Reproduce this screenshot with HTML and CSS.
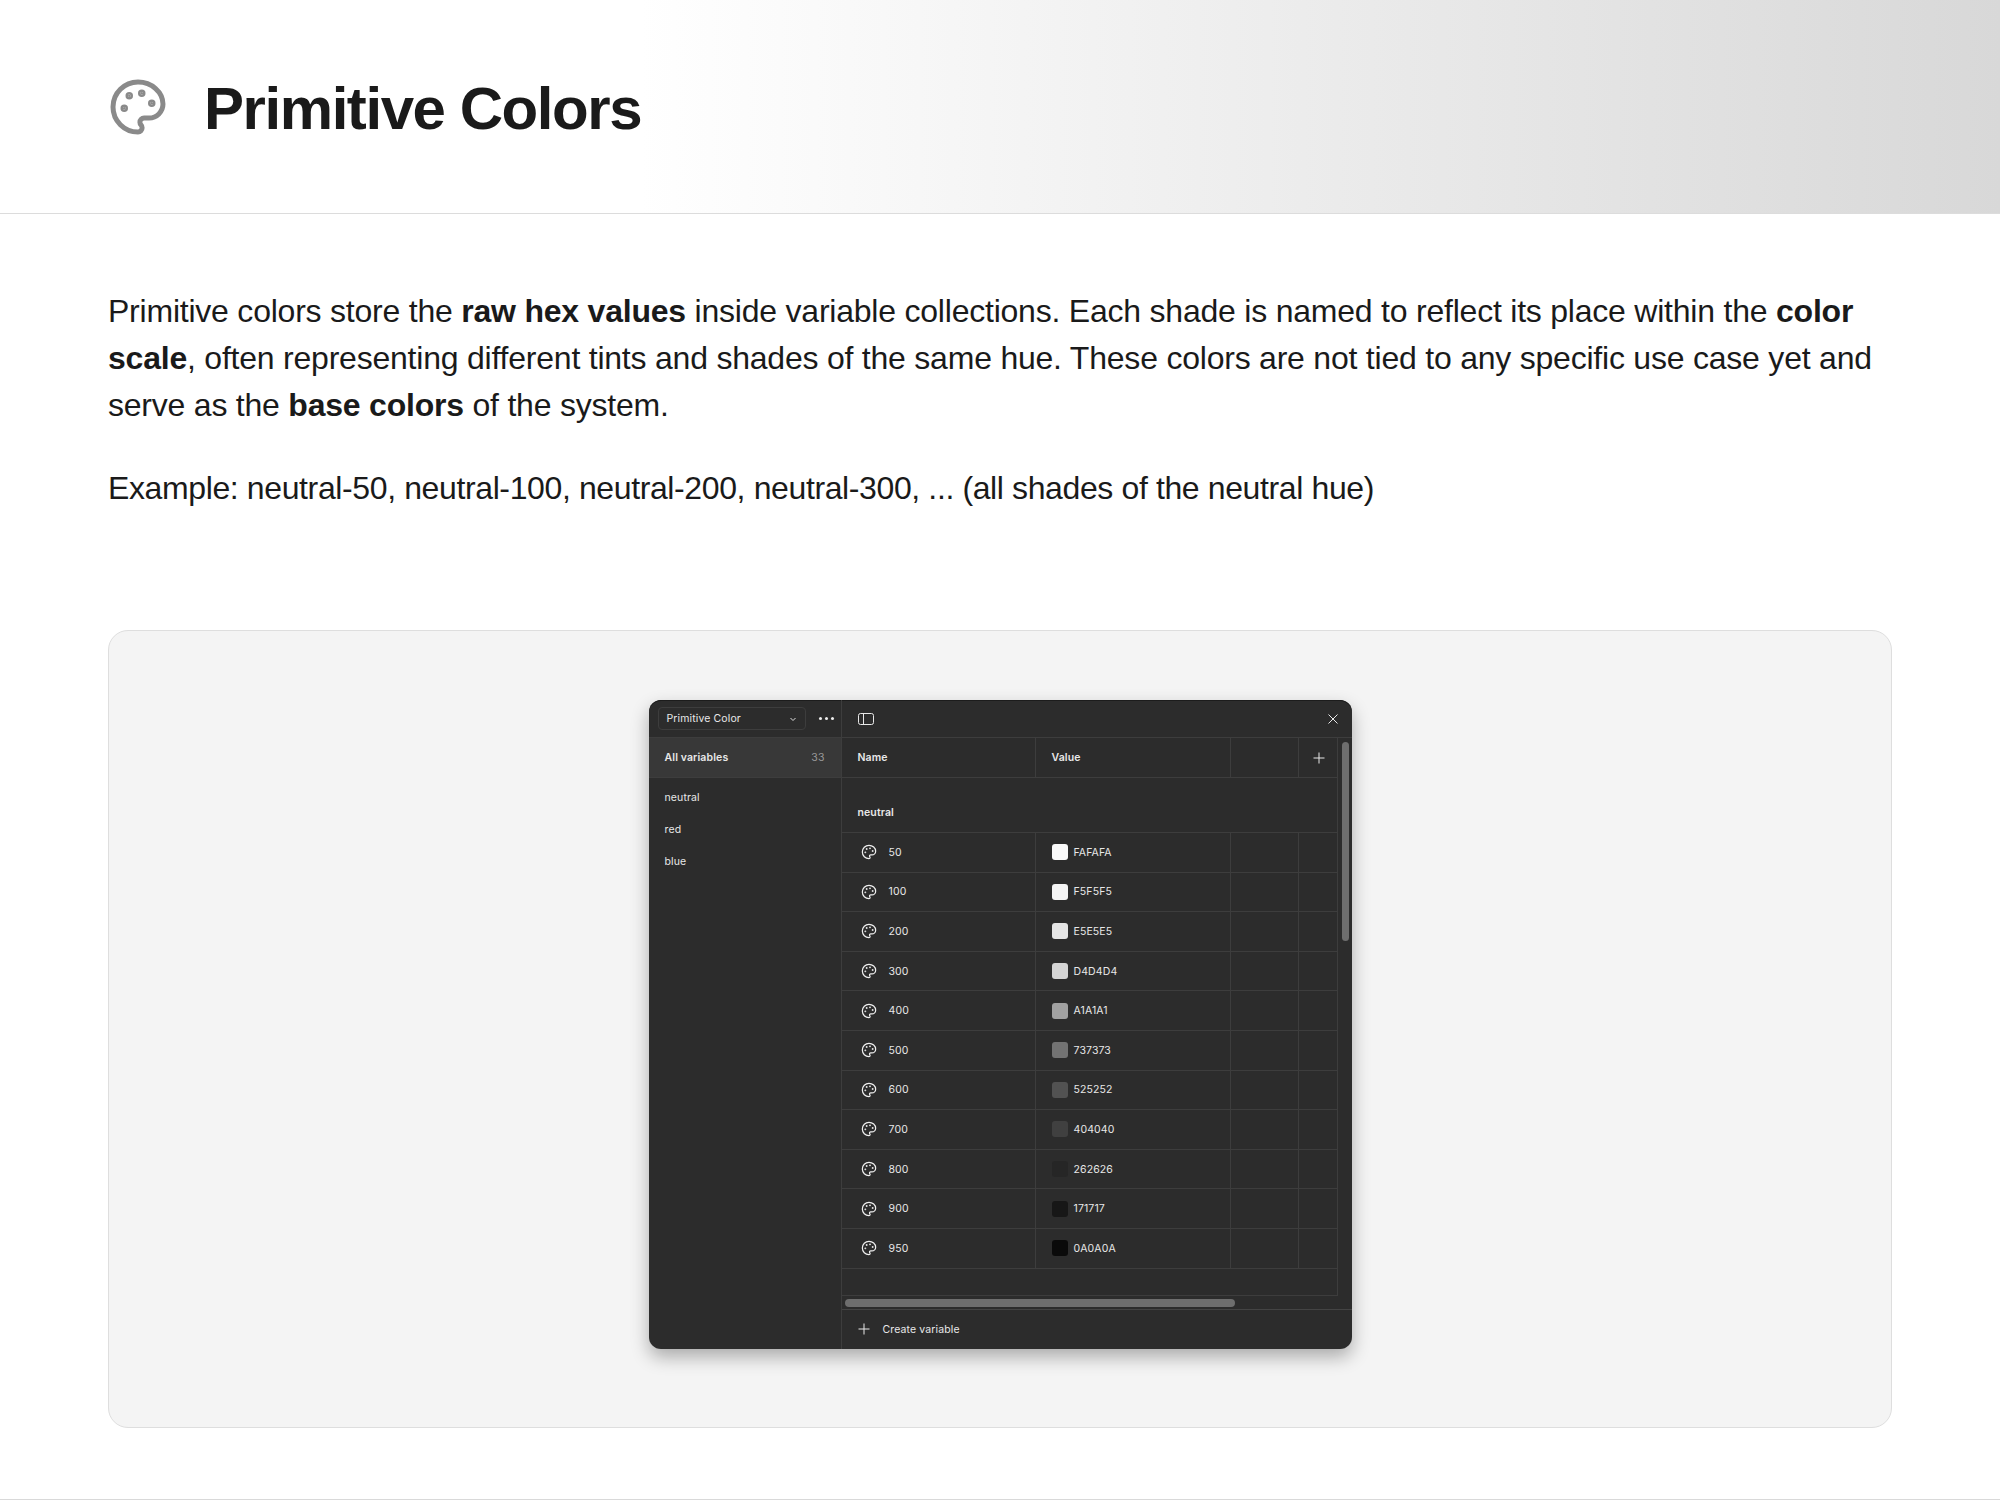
FILE: index.html
```html
<!DOCTYPE html>
<html lang="en">
<head>
    <meta charset="UTF-8">
    <title>Primitive Colors</title>
    <link rel="stylesheet" href="styles.css">
</head>
<body>
    <svg class="sprite" width="0" height="0">
        <symbol id="palette" viewBox="0 0 24 24">
            <circle cx="13.5" cy="6.5" r=".5" fill="currentColor"/>
            <circle cx="17.5" cy="10.5" r=".5" fill="currentColor"/>
            <circle cx="8.5" cy="7.5" r=".5" fill="currentColor"/>
            <circle cx="6.5" cy="12.5" r=".5" fill="currentColor"/>
            <path d="M12 2C6.5 2 2 6.5 2 12s4.5 10 10 10c.926 0 1.648-.746 1.648-1.688 0-.437-.18-.835-.437-1.125-.29-.289-.438-.652-.438-1.125a1.64 1.64 0 0 1 1.668-1.668h1.996c3.051 0 5.555-2.503 5.555-5.554C21.965 6.012 17.461 2 12 2z"/>
        </symbol>
        <symbol id="plus" viewBox="0 0 12 12">
            <path d="M6 .5v11M.5 6h11"/>
        </symbol>
    </svg>

    <!-- Header -->
    <header class="header">
        <svg class="header-icon"><use href="#palette"/></svg>
        <h1>Primitive Colors</h1>
    </header>

    <main class="content">
        <p class="intro">Primitive colors store the <b>raw hex values</b> inside variable collections. Each shade is named to reflect its place within the <b>color</b><br><b>scale</b>, often representing different tints and shades of the same hue. These colors are not tied to any specific use case yet and<br>serve as the <b>base colors</b> of the system.</p>
        <p class="intro example">Example: neutral-50, neutral-100, neutral-200, neutral-300, ... (all shades of the neutral hue)</p>

        <!-- Variables window -->
        <section class="panel">
            <div class="window">
                <aside class="side">
                    <div class="side-top">
                        <div class="select">
                            <span>Primitive Color</span>
                            <svg class="chevron" viewBox="0 0 8 8"><path d="M1.5 3l2.5 2.5L6.5 3"/></svg>
                        </div>
                        <div class="dots"><i></i><i></i><i></i></div>
                    </div>
                    <div class="side-all"><span>All variables</span><span class="count">33</span></div>
                    <ul class="side-list">
                        <li>neutral</li>
                        <li>red</li>
                        <li>blue</li>
                    </ul>
                </aside>

                <div class="main">
                    <div class="main-top">
                        <svg class="panel-icon" viewBox="0 0 16 12"><rect x=".5" y=".5" width="15" height="11" rx="2"/><path d="M5.5 .5v11"/></svg>
                        <svg class="close-icon" viewBox="0 0 10 10"><path d="M.5 .5l9 9M9.5 .5l-9 9"/></svg>
                    </div>
                    <div class="main-body">
                        <div class="table">
                            <div class="row row-head">
                                <div class="cell">Name</div>
                                <div class="cell">Value</div>
                                <div class="cell"></div>
                                <div class="cell cell-add"><svg class="plus-icon"><use href="#plus"/></svg></div>
                            </div>
                            <div class="group">neutral</div>
                            <div class="row">
                                <div class="cell"><svg class="var-icon"><use href="#palette"/></svg>50</div>
                                <div class="cell"><span class="swatch swatch-50"></span>FAFAFA</div>
                                <div class="cell"></div><div class="cell"></div>
                            </div>
                            <div class="row">
                                <div class="cell"><svg class="var-icon"><use href="#palette"/></svg>100</div>
                                <div class="cell"><span class="swatch swatch-100"></span>F5F5F5</div>
                                <div class="cell"></div><div class="cell"></div>
                            </div>
                            <div class="row">
                                <div class="cell"><svg class="var-icon"><use href="#palette"/></svg>200</div>
                                <div class="cell"><span class="swatch swatch-200"></span>E5E5E5</div>
                                <div class="cell"></div><div class="cell"></div>
                            </div>
                            <div class="row">
                                <div class="cell"><svg class="var-icon"><use href="#palette"/></svg>300</div>
                                <div class="cell"><span class="swatch swatch-300"></span>D4D4D4</div>
                                <div class="cell"></div><div class="cell"></div>
                            </div>
                            <div class="row">
                                <div class="cell"><svg class="var-icon"><use href="#palette"/></svg>400</div>
                                <div class="cell"><span class="swatch swatch-400"></span>A1A1A1</div>
                                <div class="cell"></div><div class="cell"></div>
                            </div>
                            <div class="row">
                                <div class="cell"><svg class="var-icon"><use href="#palette"/></svg>500</div>
                                <div class="cell"><span class="swatch swatch-500"></span>737373</div>
                                <div class="cell"></div><div class="cell"></div>
                            </div>
                            <div class="row">
                                <div class="cell"><svg class="var-icon"><use href="#palette"/></svg>600</div>
                                <div class="cell"><span class="swatch swatch-600"></span>525252</div>
                                <div class="cell"></div><div class="cell"></div>
                            </div>
                            <div class="row">
                                <div class="cell"><svg class="var-icon"><use href="#palette"/></svg>700</div>
                                <div class="cell"><span class="swatch swatch-700"></span>404040</div>
                                <div class="cell"></div><div class="cell"></div>
                            </div>
                            <div class="row">
                                <div class="cell"><svg class="var-icon"><use href="#palette"/></svg>800</div>
                                <div class="cell"><span class="swatch swatch-800"></span>262626</div>
                                <div class="cell"></div><div class="cell"></div>
                            </div>
                            <div class="row">
                                <div class="cell"><svg class="var-icon"><use href="#palette"/></svg>900</div>
                                <div class="cell"><span class="swatch swatch-900"></span>171717</div>
                                <div class="cell"></div><div class="cell"></div>
                            </div>
                            <div class="row">
                                <div class="cell"><svg class="var-icon"><use href="#palette"/></svg>950</div>
                                <div class="cell"><span class="swatch swatch-950"></span>0A0A0A</div>
                                <div class="cell"></div><div class="cell"></div>
                            </div>
                            <div class="row-empty"></div>
                        </div>
                        <div class="vscroll"><div class="vthumb"></div></div>
                    </div>
                    <div class="hscroll"><div class="hthumb"></div></div>
                    <div class="main-foot">
                        <svg class="plus-icon"><use href="#plus"/></svg>
                        <span>Create variable</span>
                    </div>
                </div>
            </div>
        </section>
    </main>
</body>
</html>
```

FILE: styles.css
```css
* {
    margin: 0;
    padding: 0;
    box-sizing: border-box;
}

body {
    font-family: "Liberation Sans", Arial, sans-serif;
    color: #1a1a1a;
    background: #fff;
    height: 1500px;
    overflow: hidden;
    border-bottom: 1px solid #d9d9d9;
}

.sprite {
    display: block;
    height: 0;
}

.header {
    height: 214px;
    display: flex;
    align-items: center;
    gap: 36px;
    padding: 0 108px;
    border-bottom: 1px solid #dcdcdc;
    background: linear-gradient(90deg, #fff 32%, #d8d8d8 100%);
}

.header-icon {
    width: 60px;
    height: 60px;
    fill: none;
    stroke: #8a8a8a;
    stroke-width: 2;
    color: #8a8a8a;
}

.header h1 {
    margin-top: 3px;
    font-size: 60px;
    font-weight: 700;
    letter-spacing: -1.44px;
}

.content {
    padding: 74px 108px 0;
}

.intro {
    font-size: 32px;
    line-height: 47px;
    letter-spacing: -0.22px;
}

.example {
    margin-top: 36px;
    letter-spacing: -0.38px;
}

.panel {
    margin-top: 118px;
    height: 798px;
    padding-top: 69px;
    display: flex;
    justify-content: center;
    align-items: flex-start;
    background: #f4f4f4;
    border: 1px solid #dedede;
    border-radius: 20px;
}

/* Variables window */
.window {
    width: 703px;
    height: 649px;
    display: grid;
    grid-template-columns: 193px 1fr;
    font-family: Inter, sans-serif;
    font-size: 10.5px;
    letter-spacing: 0.12px;
    color: #e8e8e8;
    background: #2c2c2c;
    border-radius: 12px;
    box-shadow: inset 0 1px 0 #1c1c1c, 0 8px 18px rgba(0, 0, 0, 0.3);
    overflow: hidden;
}

.side {
    border-right: 1px solid #3d3d3d;
}

.side-top {
    height: 38px;
    display: flex;
    align-items: center;
    gap: 13px;
    padding-left: 9px;
    border-bottom: 1px solid #3d3d3d;
}

.select {
    width: 148px;
    height: 23px;
    display: flex;
    align-items: center;
    justify-content: space-between;
    padding: 0 8px;
    border: 1px solid #3d3d3d;
    border-radius: 4px;
}

.chevron {
    width: 8px;
    height: 8px;
    fill: none;
    stroke: #ddd;
    stroke-width: 1;
}

.dots {
    display: flex;
    gap: 3px;
}

.dots i {
    width: 3px;
    height: 3px;
    border-radius: 50%;
    background: #eee;
}

.side-all {
    height: 40px;
    display: flex;
    align-items: center;
    justify-content: space-between;
    padding: 0 16px;
    font-weight: 600;
    background: #383838;
    border-bottom: 1px solid #3d3d3d;
}

.count {
    font-weight: 400;
    color: #999;
}

.side-list {
    list-style: none;
    padding-top: 4px;
}

.side-list li {
    height: 32px;
    line-height: 32px;
    padding-left: 16px;
}

.main {
    display: flex;
    flex-direction: column;
}

.main-top {
    height: 38px;
    display: flex;
    align-items: center;
    justify-content: space-between;
    padding: 0 14px 0 16px;
    border-bottom: 1px solid #3d3d3d;
}

.panel-icon {
    width: 16px;
    height: 12px;
    fill: none;
    stroke: #e8e8e8;
    stroke-width: 1;
}

.close-icon {
    width: 10px;
    height: 10px;
    fill: none;
    stroke: #e8e8e8;
    stroke-width: 1;
}

.main-body {
    display: flex;
}

.table {
    width: 496px;
    border-right: 1px solid #3d3d3d;
}

.row {
    height: 39.6px;
    display: grid;
    grid-template-columns: 194px 195px 68px 1fr;
    border-bottom: 1px solid #3d3d3d;
}

.row-head {
    height: 40px;
    font-weight: 600;
}

.cell {
    display: flex;
    align-items: center;
    padding-left: 16px;
    border-right: 1px solid #3d3d3d;
}

.cell:last-child {
    border-right: 0;
}

.cell-add {
    padding-left: 14px;
}

.group {
    height: 55px;
    padding: 28px 0 0 16px;
    font-weight: 600;
    border-bottom: 1px solid #3d3d3d;
}

.row-empty {
    height: 27px;
    border-bottom: 1px solid #3d3d3d;
}

.var-icon {
    width: 16px;
    height: 16px;
    margin: 0 12px 0 3px;
    fill: none;
    stroke: #f0f0f0;
    stroke-width: 1.8;
    color: #f0f0f0;
}

.plus-icon {
    width: 12px;
    height: 12px;
    fill: none;
    stroke: #e8e8e8;
    stroke-width: 1;
}

.swatch {
    width: 16px;
    height: 16px;
    margin-right: 6px;
    border-radius: 3px;
}

.swatch-50 { background: #fafafa; }
.swatch-100 { background: #f5f5f5; }
.swatch-200 { background: #e5e5e5; }
.swatch-300 { background: #d4d4d4; }
.swatch-400 { background: #a1a1a1; }
.swatch-500 { background: #737373; }
.swatch-600 { background: #525252; }
.swatch-700 { background: #404040; }
.swatch-800 { background: #262626; }
.swatch-900 { background: #171717; }
.swatch-950 { background: #0a0a0a; }

.vscroll {
    flex: 1;
    padding: 4px 3px 0 4px;
}

.vthumb {
    height: 199px;
    border-radius: 4px;
    background: #6e6e6e;
}

.hscroll {
    height: 14px;
    padding: 3px 0 0 3px;
    border-bottom: 1px solid #444;
}

.hthumb {
    width: 390px;
    height: 8px;
    border-radius: 4px;
    background: #6e6e6e;
}

.main-foot {
    flex: 1;
    display: flex;
    align-items: center;
    gap: 13px;
    padding-left: 16px;
}
```
